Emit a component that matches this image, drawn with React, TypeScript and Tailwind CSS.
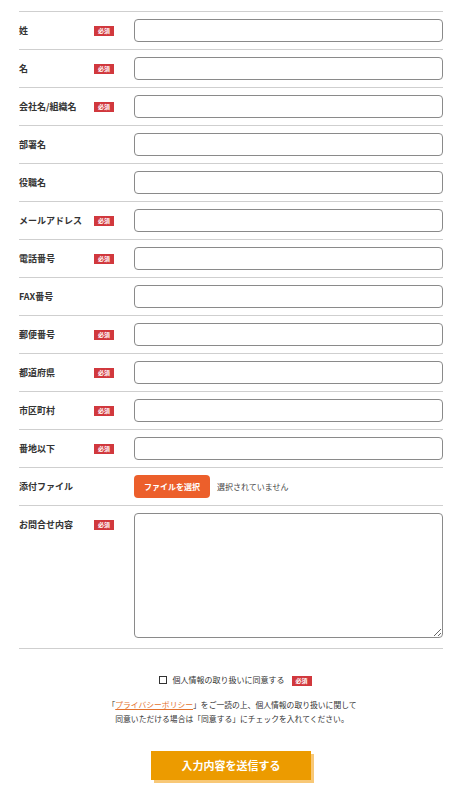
import React from "react";

const font = { fontFamily: '"Noto Sans CJK JP", "Noto Sans", sans-serif' };

type Field = { label: string; required?: boolean };

const fields: Field[] = [
  { label: "姓", required: true },
  { label: "名", required: true },
  { label: "会社名/組織名", required: true },
  { label: "部署名" },
  { label: "役職名" },
  { label: "メールアドレス", required: true },
  { label: "電話番号", required: true },
  { label: "FAX番号" },
  { label: "郵便番号", required: true },
  { label: "都道府県", required: true },
  { label: "市区町村", required: true },
  { label: "番地以下", required: true },
];

function Badge() {
  return (
    <span className="inline-flex h-[10px] w-[20px] items-center justify-center bg-[#d1383d] text-[6px] font-bold leading-none text-white">
      必須
    </span>
  );
}

function Label({ label, required }: Field) {
  return (
    <div className="flex h-[23px] w-[115px] shrink-0 items-center">
      <span className="w-[75px] text-[9px] font-bold text-[#333]">{label}</span>
      {required && <Badge />}
    </div>
  );
}

export default function App() {
  return (
    <div className="min-h-[789px] bg-white pt-[11px]" style={font}>
      <form className="ml-[19px] w-[424px]">
        {fields.map((f) => (
          <div key={f.label} className="flex items-center border-t border-[#cfcfcf] py-[7px]">
            <Label {...f} />
            <input className="h-[23px] flex-1 rounded-[4px] border border-[#8a8a8a] bg-white" />
          </div>
        ))}

        <div className="flex items-center border-t border-[#cfcfcf] py-[7px]">
          <Label label="添付ファイル" />
          <button
            type="button"
            className="h-[23px] w-[76px] rounded-[4px] bg-[#ec5f2b] text-[8px] font-bold text-white"
          >
            ファイルを選択
          </button>
          <span className="ml-[7px] text-[8px] text-[#444]">選択されていません</span>
        </div>

        <div className="flex items-start border-y border-[#cfcfcf] pb-[10px] pt-[7px]">
          <Label label="お問合せ内容" required />
          <textarea className="block h-[125px] flex-1 rounded-[4px] border border-[#8a8a8a] bg-white" />
        </div>

        <div className="mt-[25px] flex items-center justify-center gap-[6px] pl-[8px] text-[8px] text-[#333]">
          <span className="h-[8px] w-[8px] border border-[#333] bg-white" />
          <span>個人情報の取り扱いに同意する</span>
          <span className="ml-[1px]">
            <Badge />
          </span>
        </div>

        <div className="mt-[12px] pl-[2px] text-center text-[7.8px] leading-[14px] text-[#333]">
          <p>
            「<span className="text-[#e4722d] underline">プライバシーポリシー</span>」をご一読の上、個人情報の取り扱いに関して
          </p>
          <p>同意いただける場合は「同意する」にチェックを入れてください。</p>
        </div>

        <div className="mt-[25px] flex justify-center">
          <button
            type="button"
            className="h-[29px] w-[160px] bg-[#ec9b00] text-[11px] font-bold text-white shadow-[3px_3px_0_#f8c877]"
          >
            入力内容を送信する
          </button>
        </div>
      </form>
    </div>
  );
}
